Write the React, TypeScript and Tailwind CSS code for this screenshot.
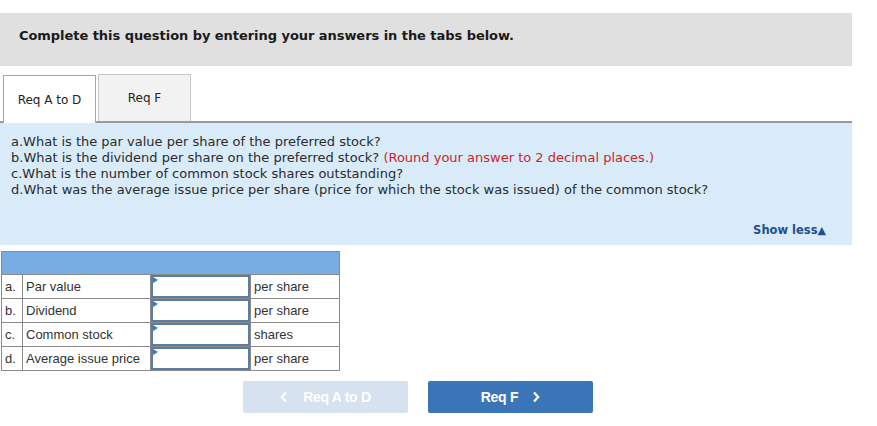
import { useState } from 'react';

const rows = [
  { key: 'a.', label: 'Par value', unit: 'per share' },
  { key: 'b.', label: 'Dividend', unit: 'per share' },
  { key: 'c.', label: 'Common stock', unit: 'shares' },
  { key: 'd.', label: 'Average issue price', unit: 'per share' },
];

function AnswerInput() {
  const [value, setValue] = useState('');
  return (
    <div className="relative h-[23px] border-2 border-[#5b7ca3] bg-white">
      <span className="absolute left-0 top-0 w-0 h-0 border-y-[3px] border-y-transparent border-l-[5px] border-l-[#3c79c4]" />
      <input
        value={value}
        onChange={(e) => setValue(e.target.value)}
        className="w-full h-full outline-none bg-transparent px-1 text-[12px]"
      />
    </div>
  );
}

function Chevron({ left }: { left?: boolean }) {
  return (
    <svg width="8" height="12" viewBox="0 0 8 12" fill="none" stroke="currentColor" strokeWidth="2.2">
      {left ? <path d="M6 1.5 1.8 6 6 10.5" /> : <path d="M2 1.5 6.2 6 2 10.5" />}
    </svg>
  );
}

export default function App() {
  return (
    <div className="w-[877px] h-[426px] bg-white pt-[13px] font-['DejaVu_Sans',Verdana,sans-serif] text-[#222]">
      <div className="w-[852px] h-[53px] bg-[#e0e0e0] pl-[19px] pt-[10px]">
        <span className="text-[13px] font-bold text-[#1a1a1a] tracking-[-0.05px]">
          Complete this question by entering your answers in the tabs below.
        </span>
      </div>

      <div className="w-[852px] mt-[8px] flex items-end border-b-[2px] border-[#9a9a9a] pl-[3px]">
        <div className="w-[93px] h-[48px] -mb-[2px] bg-white border border-b-0 border-[#a6a6a6] flex items-center justify-center text-[12px] text-[#222]">
          Req A to D
        </div>
        <div className="w-[93px] h-[47px] ml-[2px] bg-[#f2f2f2] border border-b-0 border-[#c8c8c8] flex items-center justify-center text-[12px] text-[#222]">
          Req F
        </div>
      </div>

      <div className="w-[852px] h-[122px] bg-[#d9ebf9] relative pl-[11px] pt-[11px] text-[13px] leading-[16px] text-[#2b2b2b]">
        <p>a.What is the par value per share of the preferred stock?</p>
        <p>
          b.What is the dividend per share on the preferred stock?{' '}
          <span className="text-[#c9262c]">(Round your answer to 2 decimal places.)</span>
        </p>
        <p>c.What is the number of common stock shares outstanding?</p>
        <p>d.What was the average issue price per share (price for which the stock was issued) of the common stock?</p>
        <div className="absolute right-[26px] bottom-[7px] flex items-center text-[11.5px] font-bold text-[#1f4f8e]">
          <span>Show less</span>
          <span className="text-[11px] leading-none">▲</span>
        </div>
      </div>

      <table className="mt-[6px] ml-[1px] border-collapse font-['Liberation_Sans',Arial,sans-serif] text-[13px] text-[#333]">
        <thead>
          <tr>
            <th colSpan={4} className="h-[23px] bg-[#77ade3] border border-[#8a8a8a]" />
          </tr>
        </thead>
        <tbody>
          {rows.map((r) => (
            <tr key={r.key} className="h-[24px]">
              <td className="w-[21px] border border-[#8a8a8a] pl-[3px] text-left">{r.key}</td>
              <td className="w-[128px] border border-[#8a8a8a] pl-[3px] text-left">{r.label}</td>
              <td className="w-[100px] border border-[#8a8a8a] p-0 align-top">
                <AnswerInput />
              </td>
              <td className="w-[89px] border border-[#8a8a8a] pl-[3px] text-left">{r.unit}</td>
            </tr>
          ))}
        </tbody>
      </table>

      <div className="flex gap-[20px] ml-[243px] mt-[10px] font-['Liberation_Sans',Arial,sans-serif] text-[14px] font-bold tracking-[-0.3px]">
        <button className="w-[165px] h-[32px] rounded-[2px] bg-[#d6e2f0] text-white flex items-center justify-center gap-[15px]">
          <Chevron left />
          <span>Req A to D</span>
        </button>
        <button className="w-[165px] h-[32px] rounded-[2px] bg-[#3a75b8] text-white flex items-center justify-center gap-[14px]">
          <span>Req F</span>
          <Chevron />
        </button>
      </div>
    </div>
  );
}
